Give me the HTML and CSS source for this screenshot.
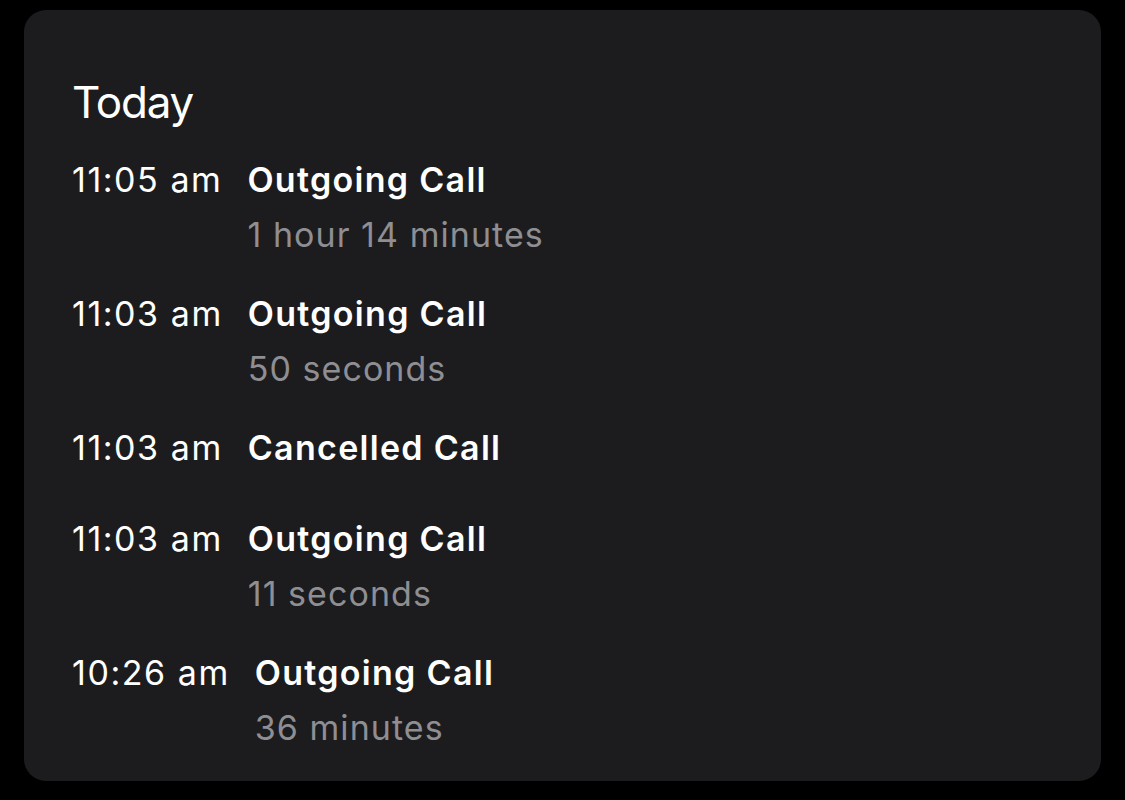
FILE: index.html
```html
<!DOCTYPE html>
<html lang="en">
<head>
<meta charset="utf-8">
<title>Call history</title>
<link rel="stylesheet" href="styles.css">
</head>
<body>
<div class="card">
  <h2 class="heading">Today</h2>
  <ul class="calls">
    <li class="call">
      <span class="time">11:05 am</span>
      <div class="info">
        <div class="type">Outgoing Call</div>
        <div class="duration">1 hour 14 minutes</div>
      </div>
    </li>
    <li class="call">
      <span class="time">11:03 am</span>
      <div class="info">
        <div class="type">Outgoing Call</div>
        <div class="duration">50 seconds</div>
      </div>
    </li>
    <li class="call call-nosub">
      <span class="time">11:03 am</span>
      <div class="info">
        <div class="type">Cancelled Call</div>
      </div>
    </li>
    <li class="call">
      <span class="time">11:03 am</span>
      <div class="info">
        <div class="type">Outgoing Call</div>
        <div class="duration">11 seconds</div>
      </div>
    </li>
    <li class="call">
      <span class="time">10:26 am</span>
      <div class="info">
        <div class="type">Outgoing Call</div>
        <div class="duration">36 minutes</div>
      </div>
    </li>
  </ul>
</div>
</body>
</html>
```

FILE: styles.css
```css
html, body {
  margin: 0;
  padding: 0;
  background: #000;
}

body {
  font-family: Inter, "Noto Sans", "Liberation Sans", sans-serif;
  color: #fff;
  padding: 10px 24px 0 24px;
}

.card {
  width: 1077px;
  height: 771px;
  box-sizing: border-box;
  background: #1c1c1e;
  border-radius: 22px;
  padding: 65px 0 0 48px;
}

.heading {
  margin: 0;
  font-size: 44px;
  line-height: 54px;
  font-weight: 400;
  letter-spacing: -1.2px;
}

.calls {
  list-style: none;
  margin: 30px 0 0 0;
  padding: 0;
}

.call {
  display: flex;
  gap: 25px;
  padding-bottom: 37px;
}

.call-nosub {
  padding-bottom: 49px;
}

.time {
  font-size: 34px;
  line-height: 42px;
  font-weight: 400;
  letter-spacing: 1.55px;
}

.info {
  display: flex;
  flex-direction: column;
  gap: 13px;
}

.type {
  font-size: 34px;
  line-height: 42px;
  font-weight: 600;
  letter-spacing: 1.3px;
}

.duration {
  font-size: 34px;
  line-height: 42px;
  color: #8e8e93;
  letter-spacing: 1.05px;
}
```
